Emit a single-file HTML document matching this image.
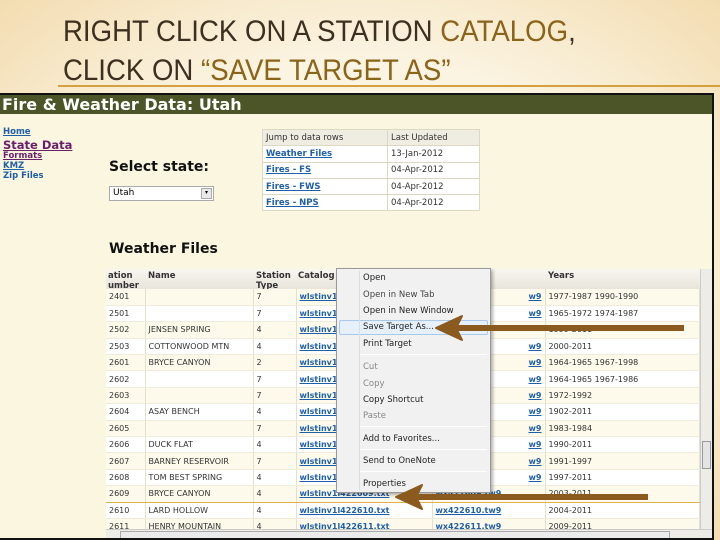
<!DOCTYPE html>
<html><head><meta charset="utf-8"><style>
*{margin:0;padding:0;box-sizing:border-box}
body{width:720px;height:540px;overflow:hidden;position:relative;font-family:"Liberation Sans","DejaVu Sans",sans-serif;background:radial-gradient(ellipse at center,#fbf4e2 55%,#f3dcb0 100%)}
.a{position:absolute;white-space:nowrap}
.t{font-family:"Liberation Sans",sans-serif;font-size:30px;line-height:34px;color:#3e3020;transform:scaleX(.92);transform-origin:left top}
.g{color:#8a6418}
#box{position:absolute;left:0;top:93px;width:714px;height:447px;background:#faf6e0;border-right:2px solid #111;border-top:2px solid #111;border-bottom:2px solid #111;overflow:hidden}
.hd{position:absolute;left:0;top:0;width:712px;height:19px;background:#4b5528;color:#fff;font:bold 16px "DejaVu Sans",sans-serif;padding-left:2px;line-height:19px}
.lk{color:#1f5fa8;font-weight:bold;text-decoration:underline;font-family:"DejaVu Sans",sans-serif}
table{border-collapse:collapse}
.jt td{border:1px solid #ddd8c4;height:16.3px;font:8.5px "DejaVu Sans",sans-serif;padding:0 3px;background:#fff;color:#333}
.jt tr:first-child td{background:#efece2}
.dt td{height:16.4px;font:8px "DejaVu Sans",sans-serif;color:#333;padding:0 3px;border-right:1px solid #e4e0d0;border-bottom:1px solid #f0ecdc}
.dt tr:nth-child(odd) td{background:#fdfaec}
.dt tr:nth-child(even) td{background:#fff}
.dt a{color:#1f5fa8;font-weight:bold;text-decoration:underline}
.cm{position:absolute;left:336px;top:268px;width:155px;height:225px;background:#f1f1f1;border:1px solid #999;box-shadow:2px 2px 3px rgba(0,0,0,.3);font:8.5px "DejaVu Sans",sans-serif;color:#222}
.cm div{position:absolute;left:26px}
.sep{position:absolute;left:22px!important;width:128px;height:1px;background:#d8d8d8;border-bottom:1px solid #fff}
</style></head><body>
<div class="a t" style="left:63px;top:15px">RIGHT CLICK ON A STATION <span class="g">CATALOG</span>,</div>
<div class="a t" style="left:63px;top:54px">CLICK ON <span class="g">“SAVE TARGET AS”</span></div>
<div class="a" style="left:58px;top:85px;width:662px;height:2px;background:#d4a040"></div>
<div id="box">
<div class="hd">Fire &amp; Weather Data: Utah</div>
<div class="a lk" style="left:3px;top:32px;font-size:8.5px">Home</div>
<div class="a" style="left:3px;top:43px;font:bold 11.5px 'DejaVu Sans',sans-serif;color:#6a1f6a;text-decoration:underline">State Data</div>
<div class="a" style="left:3px;top:56px;font:bold 8.5px 'DejaVu Sans',sans-serif;color:#6a1f6a;text-decoration:underline">Formats</div>
<div class="a lk" style="left:3px;top:66px;font-size:8.5px">KMZ</div>
<div class="a" style="left:3px;top:76px;font:bold 8.5px 'DejaVu Sans',sans-serif;color:#1f5fa8">Zip Files</div>
<div class="a" style="left:109px;top:64px;font:bold 14px 'DejaVu Sans',sans-serif;color:#111">Select state:</div>
<div class="a" style="left:109px;top:91px;width:105px;height:15px;background:#fff;border:1px solid #aaa;font:9px 'DejaVu Sans',sans-serif;padding:1px 3px">Utah<span style="position:absolute;right:1px;top:1px;width:11px;height:11px;background:#e8e8e8;border:1px solid #aaa;font-size:6px;text-align:center">▾</span></div>
<table class="jt a" style="left:262px;top:34px">
<tr><td style="width:125px">Jump to data rows</td><td style="width:92px">Last Updated</td></tr>
<tr><td><a class="lk">Weather Files</a></td><td>13-Jan-2012</td></tr>
<tr><td><a class="lk">Fires - FS</a></td><td>04-Apr-2012</td></tr>
<tr><td><a class="lk">Fires - FWS</a></td><td>04-Apr-2012</td></tr>
<tr><td><a class="lk">Fires - NPS</a></td><td>04-Apr-2012</td></tr>
</table>
<div class="a" style="left:109px;top:146px;font:bold 14px 'DejaVu Sans',sans-serif;color:#111">Weather Files</div>
<div class="a" style="left:106px;top:174px;width:594px;height:22px;background:linear-gradient(#f8f6f0,#e8e4da);border-bottom:1px solid #bbb;font:bold 8.5px 'DejaVu Sans',sans-serif;color:#333">
<span class="a" style="left:2px;top:2px;line-height:10px">ation<br>umber</span>
<span class="a" style="left:42px;top:2px">Name</span>
<span class="a" style="left:150px;top:2px;line-height:10px">Station<br>Type</span>
<span class="a" style="left:192px;top:2px">Catalog</span>
<span class="a" style="left:442px;top:2px">Years</span>
</div>
<table class="dt a" style="left:106px;top:194px;width:594px">
<tr><td style="width:39px">2401</td><td style="width:108px"></td><td style="width:43px">7</td><td style="width:136px"><a>wlstinv1</a></td><td style="width:113px;text-align:right"><a>w9</a></td><td>1977-1987 1990-1990</td></tr>
<tr><td>2501</td><td></td><td>7</td><td><a>wlstinv1</a></td><td style="text-align:right"><a>w9</a></td><td>1965-1972 1974-1987</td></tr>
<tr><td>2502</td><td>JENSEN SPRING</td><td>4</td><td><a>wlstinv1</a></td><td></td><td>1999-2011</td></tr>
<tr><td>2503</td><td>COTTONWOOD MTN</td><td>4</td><td><a>wlstinv1</a></td><td style="text-align:right"><a>w9</a></td><td>2000-2011</td></tr>
<tr><td>2601</td><td>BRYCE CANYON</td><td>2</td><td><a>wlstinv1</a></td><td style="text-align:right"><a>w9</a></td><td>1964-1965 1967-1998</td></tr>
<tr><td>2602</td><td></td><td>7</td><td><a>wlstinv1</a></td><td style="text-align:right"><a>w9</a></td><td>1964-1965 1967-1986</td></tr>
<tr><td>2603</td><td></td><td>7</td><td><a>wlstinv1</a></td><td style="text-align:right"><a>w9</a></td><td>1972-1992</td></tr>
<tr><td>2604</td><td>ASAY BENCH</td><td>4</td><td><a>wlstinv1</a></td><td style="text-align:right"><a>w9</a></td><td>1902-2011</td></tr>
<tr><td>2605</td><td></td><td>7</td><td><a>wlstinv1</a></td><td style="text-align:right"><a>w9</a></td><td>1983-1984</td></tr>
<tr><td>2606</td><td>DUCK FLAT</td><td>4</td><td><a>wlstinv1</a></td><td style="text-align:right"><a>w9</a></td><td>1990-2011</td></tr>
<tr><td>2607</td><td>BARNEY RESERVOIR</td><td>7</td><td><a>wlstinv1</a></td><td style="text-align:right"><a>w9</a></td><td>1991-1997</td></tr>
<tr><td>2608</td><td>TOM BEST SPRING</td><td>4</td><td><a>wlstinv1</a></td><td style="text-align:right"><a>w9</a></td><td>1997-2011</td></tr>
<tr><td style="border-bottom:1px solid #e0b050">2609</td><td style="border-bottom:1px solid #e0b050">BRYCE CANYON</td><td style="border-bottom:1px solid #e0b050">4</td><td style="border-bottom:1px solid #e0b050"><a>wlstinv1l422609.txt</a></td><td style="border-bottom:1px solid #e0b050"><a>wx422609.tw9</a></td><td style="border-bottom:1px solid #e0b050">2003-2011</td></tr>
<tr><td>2610</td><td>LARD HOLLOW</td><td>4</td><td><a>wlstinv1l422610.txt</a></td><td><a>wx422610.tw9</a></td><td>2004-2011</td></tr>
<tr><td>2611</td><td>HENRY MOUNTAIN</td><td>4</td><td><a>wlstinv1l422611.txt</a></td><td><a>wx422611.tw9</a></td><td>2009-2011</td></tr>
</table>
<div class="a" style="left:700px;top:174px;width:12px;height:260px;background:#eeece6;border-left:1px solid #ccc"><div class="a" style="left:1px;top:172px;width:9px;height:28px;background:#e4e4e4;border:1px solid #999"></div></div>
<div class="a" style="left:106px;top:434px;width:606px;height:11px;background:#eeece6;border-top:1px solid #ccc"><div class="a" style="left:14px;top:1px;width:550px;height:9px;background:#ebebeb;border:1px solid #aaa"></div></div>
</div>
<div class="cm">
<div style="top:4px">Open</div>
<div style="top:21px;color:#444">Open in New Tab</div>
<div style="top:37px">Open in New Window</div>
<div style="left:2px!important;top:51px;width:149px;height:15px;border:1px solid #a8c8ec;background:#e6f0fa;border-radius:2px"></div>
<div style="top:53px">Save Target As...</div>
<div style="top:70px">Print Target</div>
<div class="sep" style="top:85px"></div>
<div style="top:93px;color:#888">Cut</div>
<div style="top:110px;color:#888">Copy</div>
<div style="top:126px">Copy Shortcut</div>
<div style="top:142px;color:#888">Paste</div>
<div class="sep" style="top:157px"></div>
<div style="top:165px">Add to Favorites...</div>
<div class="sep" style="top:180px"></div>
<div style="top:187px">Send to OneNote</div>
<div class="sep" style="top:202px"></div>
<div style="top:210px">Properties</div>
<div class="a" style="left:22px!important;top:2px;width:1px;height:219px;background:#ddd"></div>
</div>
<svg class="a" style="left:0;top:0" width="720" height="540">
<g fill="#8b5a1e" stroke="#8b5a1e">
<rect x="452" y="325" width="232" height="6" stroke="none"/>
<path d="M436 328 L462 316 L456 328 L462 340 Z" stroke-width="2" stroke-linejoin="round"/>
<rect x="412" y="494" width="236" height="6" stroke="none"/>
<path d="M396 497 L422 485 L416 497 L422 509 Z" stroke-width="2" stroke-linejoin="round"/>
</g>
</svg>
</body></html>
